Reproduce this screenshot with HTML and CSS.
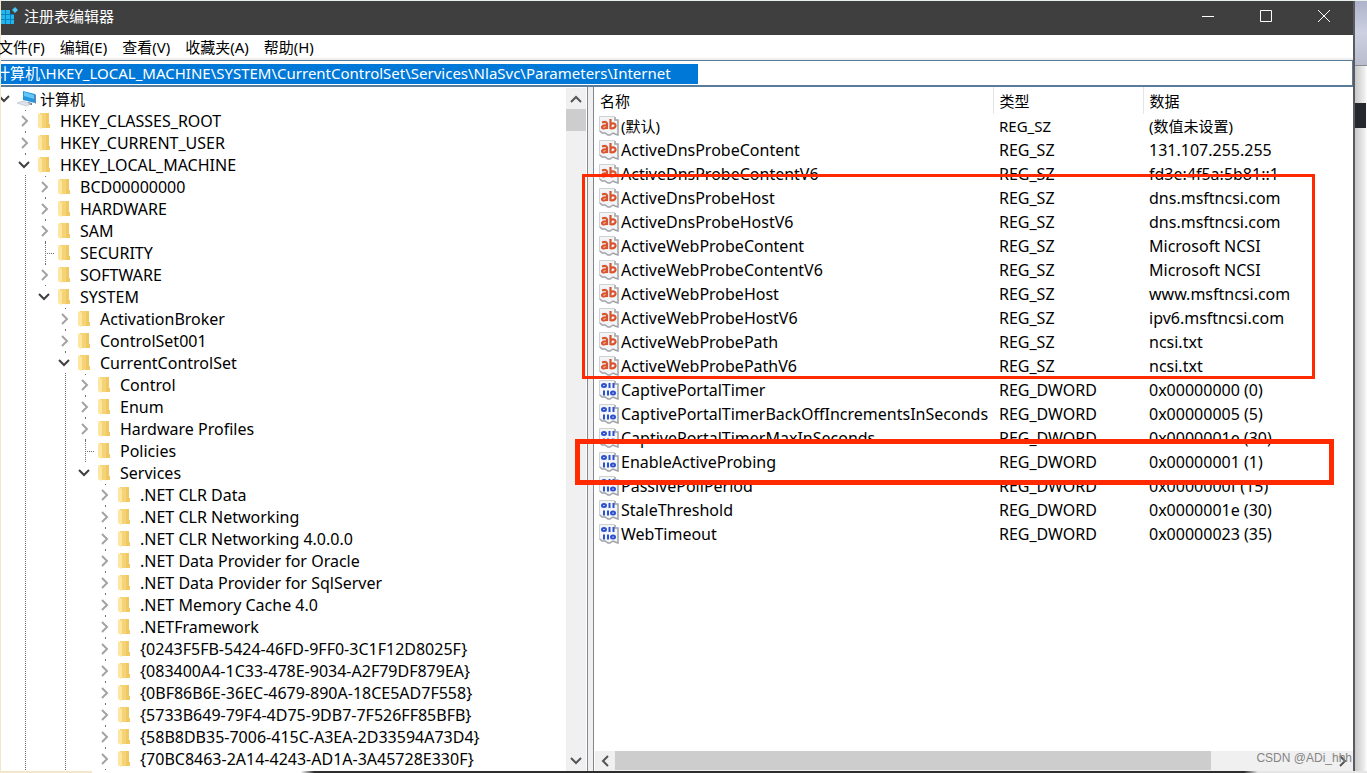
FILE: index.html
```html
<!DOCTYPE html>
<html lang="zh-CN">
<head>
<meta charset="utf-8">
<title>注册表编辑器</title>
<link rel="stylesheet" href="styles.css">
</head>
<body>
<svg class="defs" aria-hidden="true">
  <symbol id="folder" viewBox="0 0 14 18"><path d="M3 1h9v11h1v4H4z" fill="#f5d477"/><path d="M9 1h3v11h1v4H9z" fill="#f0c963"/><path d="M1 1l4 2v13l-1 1-3-2z" fill="#ffe69f"/></symbol>
  <symbol id="right" viewBox="0 0 10 12"><path d="M2 1l5 5-5 5" fill="none" stroke="#a3a3a3" stroke-width="2"/></symbol>
  <symbol id="down" viewBox="0 0 12 10"><path d="M1 2l5 5 5-5" fill="none" stroke="#404040" stroke-width="2"/></symbol>
  <symbol id="sheet" viewBox="0 0 20 20"><path d="M1 1h15l3 3v15h-2l-2-2-3 2H9l-3-2H3l-2-2z" fill="#f3f4f6"/><path d="M.5 16V.5H16" fill="none" stroke="#cfd1d4"/><path d="M16 1v3h3v15l-3-1-2-1-3 2H9l-3-2H3l-2-2" fill="none" stroke="#a0a3a6" stroke-width="1.500"/></symbol>
  <symbol id="string" viewBox="0 0 20 20"><use href="#sheet"/><g fill="none" stroke="#d9532f" stroke-width="2.200"><path d="M3 6.500q4.500-1.500 5 1V13M8 9.500c-6-1-6 3-3 3q2 0 3-1.500M11.500 3v10M11.500 8c6-3 7 4.500 1 4.500h-1"/></g></symbol>
  <symbol id="binary" viewBox="0 0 20 20"><use href="#sheet"/><g fill="none" stroke="#2a4fd0" stroke-width="2"><ellipse cx="5" cy="5.500" rx="2" ry="1.500"/><path d="M10.500 3v5M14.500 3v5M5 10.500v5M9 10.500v5"/><ellipse cx="14" cy="13" rx="2" ry="1.500"/></g></symbol>
</svg>
<div class="desktop">
  <main class="window">
    <header class="titlebar">
      <svg class="app-icon" width="17" height="18" viewBox="0 0 17 18"><path d="M0 3h13v14H0z" fill="#0783bd"/><path d="M0 3h4v4H0zM5 3h4v4H5zM0 8h4v4H0zM5 8h4v4H5zM10 8h3v4h-3zM0 13h4v4H0zM5 13h4v4H5zM10 13h3v4h-3z" fill="#24b5ee"/><path d="M9 2h4v5H9z" fill="#3f3f3f"/><path d="M14 0l3 3-3 3-3-3z" fill="#48c9f5"/></svg>
      <h1>注册表编辑器</h1>
      <div class="controls">
        <button aria-label="最小化"><svg width="14" height="14" viewBox="0 0 14 14"><path d="M1 7.500h12"/></svg></button>
        <button aria-label="最大化"><svg width="14" height="14" viewBox="0 0 14 14"><path d="M1.500 1.500h11v11h-11z"/></svg></button>
        <button aria-label="关闭"><svg width="14" height="14" viewBox="0 0 14 14"><path d="M1 1l12 12M13 1L1 13"/></svg></button>
      </div>
    </header>
    <nav class="menu"><button>文件(F)</button><button>编辑(E)</button><button>查看(V)</button><button>收藏夹(A)</button><button>帮助(H)</button></nav>
    <div class="address"><input aria-label="地址" value="计算机\HKEY_LOCAL_MACHINE\SYSTEM\CurrentControlSet\Services\NlaSvc\Parameters\Internet"></div>
    <div class="panes">
      <section class="tree-pane">
        <ul class="tree">
          <li><div class="node root"><button aria-label="折叠"><svg class="down"><use href="#down"/></svg></button><svg class="pc" width="20" height="18" viewBox="0 0 20 18"><path d="M6 1l12 3v9L6 10z" fill="#2596dd"/><path d="M7 2l10 3v4L7 6z" fill="#65c5f5"/><path d="M18 4l1 1v9l-1-1zM11 12l4 1v2h-4z" fill="#78838c"/><path d="M0 13l6-2 8 3-5 2z" fill="#dce2e8" stroke="#aeb6be" stroke-width=".5"/></svg>计算机</div>
            <ul>
              <li><div class="node"><button aria-label="展开"><svg class="right"><use href="#right"/></svg></button><svg class="folder"><use href="#folder"/></svg>HKEY_CLASSES_ROOT</div></li>
              <li><div class="node"><button aria-label="展开"><svg class="right"><use href="#right"/></svg></button><svg class="folder"><use href="#folder"/></svg>HKEY_CURRENT_USER</div></li>
              <li><div class="node"><button aria-label="折叠"><svg class="down"><use href="#down"/></svg></button><svg class="folder"><use href="#folder"/></svg>HKEY_LOCAL_MACHINE</div>
                <ul>
                  <li><div class="node"><button aria-label="展开"><svg class="right"><use href="#right"/></svg></button><svg class="folder"><use href="#folder"/></svg>BCD00000000</div></li>
                  <li><div class="node"><button aria-label="展开"><svg class="right"><use href="#right"/></svg></button><svg class="folder"><use href="#folder"/></svg>HARDWARE</div></li>
                  <li><div class="node"><button aria-label="展开"><svg class="right"><use href="#right"/></svg></button><svg class="folder"><use href="#folder"/></svg>SAM</div></li>
                  <li><div class="node"><i class="branch"></i><svg class="folder"><use href="#folder"/></svg>SECURITY</div></li>
                  <li><div class="node"><button aria-label="展开"><svg class="right"><use href="#right"/></svg></button><svg class="folder"><use href="#folder"/></svg>SOFTWARE</div></li>
                  <li class="last"><div class="node"><button aria-label="折叠"><svg class="down"><use href="#down"/></svg></button><svg class="folder"><use href="#folder"/></svg>SYSTEM</div>
                    <ul>
                      <li><div class="node"><button aria-label="展开"><svg class="right"><use href="#right"/></svg></button><svg class="folder"><use href="#folder"/></svg>ActivationBroker</div></li>
                      <li><div class="node"><button aria-label="展开"><svg class="right"><use href="#right"/></svg></button><svg class="folder"><use href="#folder"/></svg>ControlSet001</div></li>
                      <li><div class="node"><button aria-label="折叠"><svg class="down"><use href="#down"/></svg></button><svg class="folder"><use href="#folder"/></svg>CurrentControlSet</div>
                        <ul>
                          <li><div class="node"><button aria-label="展开"><svg class="right"><use href="#right"/></svg></button><svg class="folder"><use href="#folder"/></svg>Control</div></li>
                          <li><div class="node"><button aria-label="展开"><svg class="right"><use href="#right"/></svg></button><svg class="folder"><use href="#folder"/></svg>Enum</div></li>
                          <li><div class="node"><button aria-label="展开"><svg class="right"><use href="#right"/></svg></button><svg class="folder"><use href="#folder"/></svg>Hardware Profiles</div></li>
                          <li><div class="node"><i class="branch"></i><svg class="folder"><use href="#folder"/></svg>Policies</div></li>
                          <li class="last"><div class="node"><button aria-label="折叠"><svg class="down"><use href="#down"/></svg></button><svg class="folder"><use href="#folder"/></svg>Services</div>
                            <ul>
                              <li><div class="node"><button aria-label="展开"><svg class="right"><use href="#right"/></svg></button><svg class="folder"><use href="#folder"/></svg>.NET CLR Data</div></li>
                              <li><div class="node"><button aria-label="展开"><svg class="right"><use href="#right"/></svg></button><svg class="folder"><use href="#folder"/></svg>.NET CLR Networking</div></li>
                              <li><div class="node"><button aria-label="展开"><svg class="right"><use href="#right"/></svg></button><svg class="folder"><use href="#folder"/></svg>.NET CLR Networking 4.0.0.0</div></li>
                              <li><div class="node"><button aria-label="展开"><svg class="right"><use href="#right"/></svg></button><svg class="folder"><use href="#folder"/></svg>.NET Data Provider for Oracle</div></li>
                              <li><div class="node"><button aria-label="展开"><svg class="right"><use href="#right"/></svg></button><svg class="folder"><use href="#folder"/></svg>.NET Data Provider for SqlServer</div></li>
                              <li><div class="node"><button aria-label="展开"><svg class="right"><use href="#right"/></svg></button><svg class="folder"><use href="#folder"/></svg>.NET Memory Cache 4.0</div></li>
                              <li><div class="node"><button aria-label="展开"><svg class="right"><use href="#right"/></svg></button><svg class="folder"><use href="#folder"/></svg>.NETFramework</div></li>
                              <li><div class="node"><button aria-label="展开"><svg class="right"><use href="#right"/></svg></button><svg class="folder"><use href="#folder"/></svg>{0243F5FB-5424-46FD-9FF0-3C1F12D8025F}</div></li>
                              <li><div class="node"><button aria-label="展开"><svg class="right"><use href="#right"/></svg></button><svg class="folder"><use href="#folder"/></svg>{083400A4-1C33-478E-9034-A2F79DF879EA}</div></li>
                              <li><div class="node"><button aria-label="展开"><svg class="right"><use href="#right"/></svg></button><svg class="folder"><use href="#folder"/></svg>{0BF86B6E-36EC-4679-890A-18CE5AD7F558}</div></li>
                              <li><div class="node"><button aria-label="展开"><svg class="right"><use href="#right"/></svg></button><svg class="folder"><use href="#folder"/></svg>{5733B649-79F4-4D75-9DB7-7F526FF85BFB}</div></li>
                              <li><div class="node"><button aria-label="展开"><svg class="right"><use href="#right"/></svg></button><svg class="folder"><use href="#folder"/></svg>{58B8DB35-7006-415C-A3EA-2D33594A73D4}</div></li>
                              <li><div class="node"><button aria-label="展开"><svg class="right"><use href="#right"/></svg></button><svg class="folder"><use href="#folder"/></svg>{70BC8463-2A14-4243-AD1A-3A45728E330F}</div></li>
                            </ul>
                          </li>
                        </ul>
                      </li>
                    </ul>
                  </li>
                </ul>
              </li>
            </ul>
          </li>
        </ul>
        <div class="vscroll">
          <button aria-label="向上"><svg width="12" height="10" viewBox="0 0 12 10"><path d="M1 8l5-5 5 5"/></svg></button>
          <div class="vthumb"></div>
          <button class="end" aria-label="向下"><svg width="12" height="10" viewBox="0 0 12 10"><path d="M1 2l5 5 5-5"/></svg></button>
        </div>
      </section>
      <section class="list-pane">
        <div class="list">
          <table>
            <colgroup><col class="c-name"><col class="c-type"><col></colgroup>
            <thead><tr><th>名称</th><th>类型</th><th>数据</th></tr></thead>
            <tbody>
              <tr class="cjk"><td><span><svg><use href="#string"/></svg>(默认)</span></td><td>REG_SZ</td><td>(数值未设置)</td></tr>
              <tr><td><span><svg><use href="#string"/></svg>ActiveDnsProbeContent</span></td><td>REG_SZ</td><td>131.107.255.255</td></tr>
              <tr><td><span><svg><use href="#string"/></svg>ActiveDnsProbeContentV6</span></td><td>REG_SZ</td><td>fd3e:4f5a:5b81::1</td></tr>
              <tr><td><span><svg><use href="#string"/></svg>ActiveDnsProbeHost</span></td><td>REG_SZ</td><td>dns.msftncsi.com</td></tr>
              <tr><td><span><svg><use href="#string"/></svg>ActiveDnsProbeHostV6</span></td><td>REG_SZ</td><td>dns.msftncsi.com</td></tr>
              <tr><td><span><svg><use href="#string"/></svg>ActiveWebProbeContent</span></td><td>REG_SZ</td><td>Microsoft NCSI</td></tr>
              <tr><td><span><svg><use href="#string"/></svg>ActiveWebProbeContentV6</span></td><td>REG_SZ</td><td>Microsoft NCSI</td></tr>
              <tr><td><span><svg><use href="#string"/></svg>ActiveWebProbeHost</span></td><td>REG_SZ</td><td>www.msftncsi.com</td></tr>
              <tr><td><span><svg><use href="#string"/></svg>ActiveWebProbeHostV6</span></td><td>REG_SZ</td><td>ipv6.msftncsi.com</td></tr>
              <tr><td><span><svg><use href="#string"/></svg>ActiveWebProbePath</span></td><td>REG_SZ</td><td>ncsi.txt</td></tr>
              <tr><td><span><svg><use href="#string"/></svg>ActiveWebProbePathV6</span></td><td>REG_SZ</td><td>ncsi.txt</td></tr>
              <tr><td><span><svg><use href="#binary"/></svg>CaptivePortalTimer</span></td><td>REG_DWORD</td><td>0x00000000 (0)</td></tr>
              <tr><td><span><svg><use href="#binary"/></svg>CaptivePortalTimerBackOffIncrementsInSeconds</span></td><td>REG_DWORD</td><td>0x00000005 (5)</td></tr>
              <tr><td><span><svg><use href="#binary"/></svg>CaptivePortalTimerMaxInSeconds</span></td><td>REG_DWORD</td><td>0x0000001e (30)</td></tr>
              <tr><td><span><svg><use href="#binary"/></svg>EnableActiveProbing</span></td><td>REG_DWORD</td><td>0x00000001 (1)</td></tr>
              <tr><td><span><svg><use href="#binary"/></svg>PassivePollPeriod</span></td><td>REG_DWORD</td><td>0x0000000f (15)</td></tr>
              <tr><td><span><svg><use href="#binary"/></svg>StaleThreshold</span></td><td>REG_DWORD</td><td>0x0000001e (30)</td></tr>
              <tr><td><span><svg><use href="#binary"/></svg>WebTimeout</span></td><td>REG_DWORD</td><td>0x00000023 (35)</td></tr>
            </tbody>
          </table>
        </div>
        <div class="hscroll">
          <button aria-label="向左"><svg width="10" height="12" viewBox="0 0 10 12"><path d="M8 1L3 6l5 5"/></svg></button>
          <div class="htrack"><div class="hthumb"></div></div>
          <button aria-label="向右"><svg width="10" height="12" viewBox="0 0 10 12"><path d="M2 1l5 5-5 5"/></svg></button>
        </div>
        <div class="mark mark-probes"></div>
        <div class="mark mark-enable"></div>
        <span class="watermark">CSDN @ADi_hhh</span>
      </section>
    </div>
  </main>
  <aside class="backdrop"><div class="photo"></div><div class="pale"></div><div class="dark"></div></aside>
</div>
<div class="taskline"><div class="cream"></div></div>
</body>
</html>
```

FILE: styles.css
```css
* { box-sizing: border-box; }
body {
  margin: 0;
  height: 100vh;
  display: flex;
  flex-direction: column;
  overflow: hidden;
  border-top: 1px solid #e9f1ec;
  background: #fff;
  color: #000;
  font: 15px/22px "Noto Sans", "Noto Sans CJK SC", sans-serif;
}
button {
  margin: 0;
  padding: 0;
  border: 0;
  background: none;
  color: inherit;
  font: inherit;
}
svg { flex: none; display: block; }
ul { list-style: none; margin: 0; padding: 0; }
.defs { position: absolute; width: 0; height: 0; }

.desktop { flex: 1; min-height: 0; display: flex; border-left: 1px solid #f4e6cb; }
.window {
  flex: 1;
  min-width: 0;
  display: flex;
  flex-direction: column;
  border-right: 2px solid #5a5b60;
  background: #fff;
}
.titlebar {
  height: 34px;
  display: flex;
  align-items: center;
  gap: 6px;
  padding-bottom: 4px;
  background: #3f3f3f;
  color: #fff;
}
.titlebar h1 { flex: 1; margin: 0; font-size: 15px; font-weight: 400; line-height: 30px; }
.controls { display: flex; }
.controls button { width: 58px; height: 30px; display: grid; place-items: center; }
.controls svg { fill: none; stroke: #fff; }

.menu {
  height: 25px;
  display: flex;
  gap: 15px;
  border-bottom: 2px solid #f0f0f0;
  margin-left: -3px;
}
.address {
  height: 27px;
  padding: 3px 0;
  border: 1px solid #5a7c98;
  border-left: 0;
  border-bottom-width: 2px;
}
.address input {
  display: block;
  width: 697px;
  height: 20px;
  padding: 0 0 2px;
  border: 0;
  background: #0078d7;
  color: #fff;
  font: inherit;
  text-indent: -6px;
}

.panes { flex: 1; min-height: 0; display: flex; gap: 5px; background: #f0f0f0; }
.tree-pane {
  flex: 0 0 587px;
  display: flex;
  overflow: hidden;
  background: #fff;
  border-right: 1px solid #828790;
}
.tree { flex: 1; min-width: 0; padding-top: 1px; font-size: 16px; }
.tree ul { padding-left: 20px; }
.tree li { position: relative; }
.tree ul > li::before {
  content: "";
  position: absolute;
  left: 4px;
  top: 0;
  bottom: 0;
  border-left: 1px dotted #707070;
}
.tree ul > li.last::before { display: none; }
.node { position: relative; display: flex; align-items: center; height: 22px; white-space: nowrap; }
.node button, .branch { flex: none; width: 16px; height: 20px; }
.node button { display: flex; align-items: center; background: #fff; }
.branch { position: relative; }
.branch::after {
  content: "";
  position: absolute;
  left: 4px;
  right: 3px;
  top: 10px;
  border-top: 1px dotted #707070;
}
.node .down { width: 12px; height: 10px; margin-left: -3px; }
.node .right { width: 10px; height: 12px; margin-left: -1px; }
.node .folder { width: 14px; height: 18px; margin-right: 9px; }
.node .pc { margin-right: 3px; }
.root { font-size: 15px; }
.vscroll {
  flex: none;
  width: 20px;
  margin: 1px 1px 0 0;
  display: flex;
  flex-direction: column;
  background: #f0f0f0;
}
.vscroll button { height: 21px; display: grid; place-items: center; }
.vscroll .end { margin-top: auto; }
.vthumb { height: 22px; background: #cdcdcd; }
.vscroll path, .hscroll path { fill: none; stroke: #555; stroke-width: 2; }

.list-pane {
  position: relative;
  flex: 1;
  min-width: 0;
  display: flex;
  flex-direction: column;
  background: #fff;
  border-left: 1px solid #828790;
}
.list { flex: 1; min-height: 0; overflow: hidden; }
table { width: 100%; table-layout: fixed; border-collapse: collapse; }
.c-name { width: 399px; }
.c-type { width: 150px; }
th, td { padding: 0; text-align: left; font-weight: 400; white-space: nowrap; }
th { height: 27px; padding-left: 6px; border-right: 1px solid #e5e5e5; }
th:last-child { border-right: 0; }
td { height: 24px; padding-left: 6px; font-size: 16px; }
td:first-child { padding-left: 5px; }
.cjk td { font-size: 15px; }
td span { display: flex; align-items: center; gap: 2px; }
td svg { width: 20px; height: 20px; }
.hscroll { height: 20px; margin-left: 1px; display: flex; background: #f0f0f0; }
.hscroll button { width: 20px; display: grid; place-items: center; }
.htrack { flex: 1; }
.hthumb { width: 83%; height: 19px; background: #cdcdcd; }
.mark { position: absolute; border: 3px solid #ff2a00; }
.mark-probes { left: -12px; top: 87px; width: 733px; height: 205px; }
.mark-enable { left: -19px; top: 352px; width: 759px; height: 46px; border-width: 5px; }
.watermark {
  position: absolute;
  right: 1px;
  bottom: 4px;
  font: 12px/18px "Liberation Sans", sans-serif;
  color: #858585;
}

.backdrop {
  flex: none;
  width: 12px;
  display: flex;
  flex-direction: column;
  background: linear-gradient(90deg, #c8c8c8, #eee 80%, #fff);
}
.photo { height: 65px; background: linear-gradient(#aeb3cb, #cdd0e1 50%, #b9bccd); border-bottom: 1px solid #8b8b91; }
.pale { height: 37px; }
.dark { height: 25px; background: #26282d; margin-right: 1px; }
.taskline { flex: none; height: 2px; display: flex; background: linear-gradient(90deg, #fff 22%, #2d2d2d 23%, #2d2d2d 91%, #e5e5e5 92%); }
.cream { width: 92px; background: #f4e6cb; }
```
